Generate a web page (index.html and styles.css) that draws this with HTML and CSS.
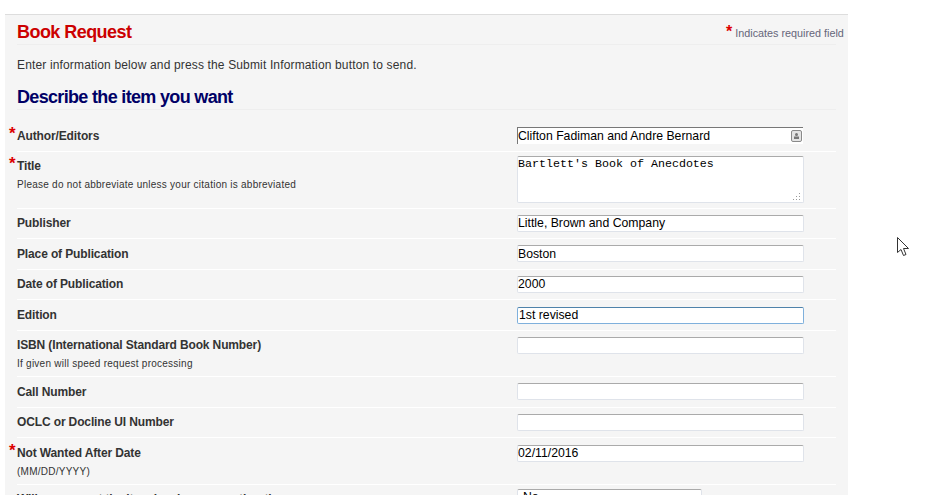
FILE: index.html
```html
<!DOCTYPE html>
<html lang="en">
<head>
    <meta charset="UTF-8">
    <meta name="viewport" content="width=device-width, initial-scale=1.0">
    <title>Book Request</title>
    <link rel="stylesheet" href="styles.css">
</head>
<body>
    <div class="panel">
        <div class="page-head">
            <h1>Book Request</h1>
            <p class="req-note"><span class="star">*</span> Indicates required field</p>
        </div>
        <p class="intro">Enter information below and press the Submit Information button to send.</p>
        <h2>Describe the item you want</h2>
        <form>
            <!-- Author -->
            <div class="row row-first">
                <div class="label-col">
                    <label class="required" for="author">Author/Editors</label>
                </div>
                <div class="contact-box">
                    <input type="text" id="author" value="Clifton Fadiman and Andre Bernard">
                    <svg class="contact-icon" width="11" height="12" viewBox="0 0 11 12">
                        <rect x="0.5" y="0.5" width="10" height="11" rx="1.5" fill="#e4e4e4" stroke="#8a8a8a"/>
                        <circle cx="5.5" cy="4.5" r="1.5" fill="#777"/>
                        <rect x="3" y="6.5" width="5" height="2.5" fill="#777"/>
                    </svg>
                </div>
            </div>
            <!-- Title -->
            <div class="row row-title">
                <div class="label-col">
                    <label class="required" for="title">Title</label>
                    <p class="help">Please do not abbreviate unless your citation is abbreviated</p>
                </div>
                <div class="area-box">
                    <textarea id="title">Bartlett's Book of Anecdotes</textarea>
                    <svg class="grip" width="8" height="8" viewBox="0 0 8 8" fill="#9a9a9a">
                        <rect x="6" y="0" width="1" height="1"/>
                        <rect x="6" y="3" width="1" height="1"/>
                        <rect x="3" y="3" width="1" height="1"/>
                        <rect x="6" y="6" width="1" height="1"/>
                        <rect x="3" y="6" width="1" height="1"/>
                        <rect x="0" y="6" width="1" height="1"/>
                    </svg>
                </div>
            </div>
            <div class="row">
                <div class="label-col"><label for="publisher">Publisher</label></div>
                <input type="text" id="publisher" value="Little, Brown and Company">
            </div>
            <div class="row">
                <div class="label-col"><label for="place">Place of Publication</label></div>
                <input type="text" id="place" value="Boston">
            </div>
            <div class="row">
                <div class="label-col"><label for="date">Date of Publication</label></div>
                <input type="text" id="date" value="2000">
            </div>
            <div class="row row-low">
                <div class="label-col"><label for="edition">Edition</label></div>
                <input type="text" class="focused" id="edition" value="1st revised">
            </div>
            <div class="row row-help">
                <div class="label-col">
                    <label for="isbn">ISBN (International Standard Book Number)</label>
                    <p class="help">If given will speed request processing</p>
                </div>
                <input type="text" id="isbn">
            </div>
            <div class="row">
                <div class="label-col"><label for="call">Call Number</label></div>
                <input type="text" id="call">
            </div>
            <div class="row">
                <div class="label-col"><label for="oclc">OCLC or Docline UI Number</label></div>
                <input type="text" id="oclc">
            </div>
            <div class="row row-help row-low">
                <div class="label-col">
                    <label class="required" for="after">Not Wanted After Date</label>
                    <p class="help">(MM/DD/YYYY)</p>
                </div>
                <input type="text" id="after" value="02/11/2016">
            </div>
            <div class="row">
                <div class="label-col"><label for="lang">Will you accept the item in a language other than</label></div>
                <select id="lang"><option>No</option></select>
            </div>
        </form>
    </div>

    <!-- mouse pointer caught in the screenshot -->
    <svg class="pointer" width="13" height="20" viewBox="0 0 13 20">
        <path d="M0.5 0.5V15.5L4 12.5L6.5 18.5L9 17.5L6.5 11.5H11.5Z" fill="#fff" stroke="#333"/>
    </svg>
</body>
</html>
```

FILE: styles.css
```css
/* General Styling */
html, body {
    height: 496px;
    overflow: hidden;
}
body {
    margin: 0;
    background: #fff;
    font-family: 'Liberation Sans', Arial, sans-serif;
    color: #333;
}
.panel {
    width: 831px;
    height: 480px;
    margin: 14px 0 0 5px;
    padding-left: 12px;
    background: #f5f5f5;
    border-top: 1px solid #ddd;
    overflow: hidden;
}

/* Headings */
.page-head {
    display: flex;
    justify-content: space-between;
    height: 29px;
    width: 819px;
    border-bottom: 1px solid #eee;
}
h1 {
    margin: 6px 0 0;
    font-size: 18px;
    line-height: 22px;
    letter-spacing: -0.55px;
    color: #c00;
}
.req-note {
    width: 119px;
    flex: none;
    margin: 6px -9px 0 0;
    font-size: 10.8px;
    line-height: 24px;
    white-space: nowrap;
    color: #66667a;
}
.star {
    font-size: 16px;
    font-weight: bold;
    line-height: 10px;
    color: #d00;
}
.intro {
    margin: 13px 0 0;
    font-size: 12px;
    line-height: 15px;
    letter-spacing: 0.15px;
}
h2 {
    width: 819px;
    height: 23px;
    margin: 13px 0 0;
    border-bottom: 1px solid #eee;
    font-size: 18px;
    line-height: 22px;
    letter-spacing: -0.67px;
    color: #006;
}

/* Form rows */
.row {
    display: flex;
    align-items: flex-start;
    width: 819px;
    padding: 6px 0 6.5px;
    border-bottom: 1px solid #fff;
}
.row-first {
    height: 24px;
    padding: 17px 0 0;
}
.row-title {
    height: 50.5px;
    padding: 5px 0 0;
}
.row-help {
    height: 39.5px;
    padding-bottom: 0;
}
.row-low input {
    margin: 1px 0 -1px;
    padding-bottom: 2px;
}
.label-col {
    width: 500px;
    flex: none;
    padding-top: 1.5px;
}
label {
    position: relative;
    display: block;
    font-size: 12px;
    font-weight: bold;
    line-height: 15px;
    letter-spacing: -0.13px;
}
.required::before {
    content: "*";
    position: absolute;
    left: -8px;
    top: -4px;
    font-size: 17px;
    line-height: 17px;
    color: #d00;
}
.help {
    margin: 5px 0 0;
    font-size: 10px;
    line-height: 12px;
    letter-spacing: 0.25px;
}

/* Fields */
input, textarea, select {
    box-sizing: border-box;
    margin: 0;
    width: 287px;
    height: 17px;
    padding: 0;
    background: #fff;
    border: 1px solid #dfe3ea;
    border-top-color: #aaa;
    border-radius: 2px;
    outline: none;
    font-family: 'Liberation Sans', Arial, sans-serif;
    font-size: 12.25px;
    color: #000;
}
input.focused {
    padding-left: 1px;
    border-color: #7fb0dc;
    border-top-color: #4f82aa;
}
select {
    width: 185px;
    height: 20px;
    margin-top: -2px;
    appearance: none;
    padding: 0 0 5px 5px;
}
.contact-box {
    position: relative;
    width: 286px;
    height: 17px;
    background: #fff;
    border-left: 1px solid #777;
    box-sizing: border-box;
}
.contact-box input {
    display: block;
    width: 100%;
    height: 16px;
    padding: 0 16px 0 0;
    border: 0;
    border-top: 1px solid #777;
    border-radius: 0;
}
.contact-icon {
    position: absolute;
    left: 273px;
    top: 3px;
}
.area-box {
    position: relative;
    width: 287px;
    height: 47px;
    margin-top: -1px;
}
textarea {
    display: block;
    height: 47px;
    padding-top: 1px;
    resize: none;
    overflow: hidden;
    font-family: 'Liberation Mono', 'Courier New', monospace;
    font-size: 11.67px;
    line-height: 13px;
}
.grip {
    position: absolute;
    right: 3px;
    bottom: 2px;
}

.pointer {
    position: absolute;
    left: 897px;
    top: 237px;
}
```
